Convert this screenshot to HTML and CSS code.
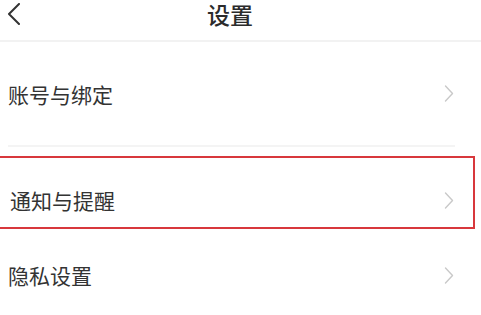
FILE: index.html
```html
<!DOCTYPE html>
<html lang="zh-CN">
<head>
<meta charset="utf-8">
<title>设置</title>
<link rel="stylesheet" href="styles.css">
</head>
<body>
<header class="header">
  <span class="back">
    <svg width="14" height="22" viewBox="0 0 14 22"><polyline points="12,1 2,11 12,21" fill="none" stroke="#333" stroke-width="2" stroke-linecap="round" stroke-linejoin="round"/></svg>
  </span>
  <h1 class="title">设置</h1>
  <span class="spacer"></span>
</header>
<main class="list">
  <div class="item item-first">
    <span class="label">账号与绑定</span>
    <svg class="chev" width="10" height="17" viewBox="0 0 10 17"><polyline points="1.5,1 8.5,8.5 1.5,16" fill="none" stroke="#c9c9c9" stroke-width="1.4" stroke-linecap="round" stroke-linejoin="round"/></svg>
  </div>
  <div class="divider"></div>
  <div class="item item-highlight">
    <span class="label">通知与提醒</span>
    <svg class="chev" width="10" height="17" viewBox="0 0 10 17"><polyline points="1.5,1 8.5,8.5 1.5,16" fill="none" stroke="#c9c9c9" stroke-width="1.4" stroke-linecap="round" stroke-linejoin="round"/></svg>
  </div>
  <div class="item item-last">
    <span class="label">隐私设置</span>
    <svg class="chev" width="10" height="17" viewBox="0 0 10 17"><polyline points="1.5,1 8.5,8.5 1.5,16" fill="none" stroke="#c9c9c9" stroke-width="1.4" stroke-linecap="round" stroke-linejoin="round"/></svg>
  </div>
</main>
</body>
</html>
```
FILE: styles.css
```css
html, body {
  margin: 0;
  padding: 0;
  background: #ffffff;
  font-family: "Noto Sans CJK SC", "Noto Sans", sans-serif;
  color: #333333;
  overflow: hidden;
}

.header {
  height: 42px;
  box-sizing: border-box;
  display: grid;
  grid-template-columns: 1fr auto 1fr;
  align-items: start;
  padding: 2px 28px 0 7px;
  border-bottom: 2px solid #f2f2f2;
}

.back {
  display: flex;
  padding-top: 1px;
}

.title {
  margin: 0;
  font-size: 23px;
  font-weight: 500;
  line-height: 25px;
  color: #2b2b2b;
}

.list {
  display: flex;
  flex-direction: column;
}

.item {
  display: flex;
  align-items: center;
  justify-content: space-between;
  padding: 0 27px 0 8px;
  box-sizing: border-box;
}

.label {
  font-size: 21px;
  line-height: 28px;
  color: #333333;
}

.chev {
  display: block;
}

.item-first {
  height: 103px;
  padding-top: 0;
}

.divider {
  height: 2px;
  background: #f4f4f4;
  margin: 0 26px 0 8px;
}

.item-highlight {
  margin: 9px 6px 0 -2px;
  height: 73px;
  border: 2px solid #d8383c;
  padding: 15px 19px 0 10px;
}

.item-last {
  height: 96px;
  padding-bottom: 4px;
}
```
